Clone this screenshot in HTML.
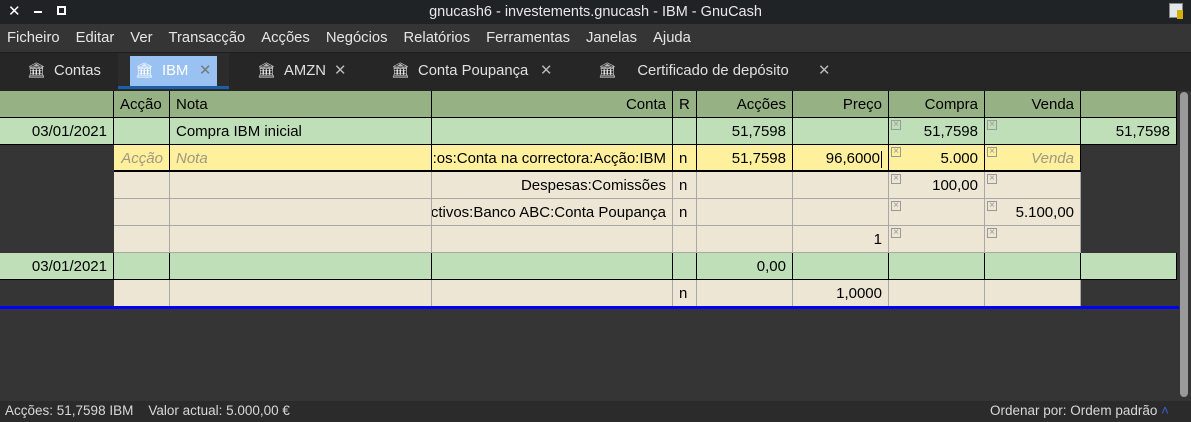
<!DOCTYPE html>
<html><head><meta charset="utf-8"><style>
*{box-sizing:border-box;margin:0;padding:0}
body{width:1191px;height:422px;background:#353535;font-family:"Liberation Sans","DejaVu Sans",sans-serif;font-size:15px;color:#000;position:relative;overflow:hidden}
.abs{position:absolute}
#title{left:0;top:0;width:1191px;height:24px;background:#202326;color:#e8e8e8;text-align:center;line-height:24px;font-size:14.5px}
#menu{left:0;top:24px;width:1191px;height:29px;background:#353535;color:#e6e6e6;line-height:29px;border-bottom:1px solid #1e1e1e;font-size:14.8px}
#menu span{margin-left:7px;margin-right:9px}
#tabs{left:0;top:53px;width:1191px;height:38px;background:#262626;color:#e0e0e0;font-size:14.8px}
.tab{position:absolute;top:0;height:38px;line-height:36px}
.row{position:absolute;left:0;height:27px;display:flex}
.c{height:27px;line-height:28px;padding:0 6px;white-space:nowrap;overflow:hidden;position:relative}
.r{display:flex;justify-content:flex-end}
.hd .c{background:#96b183;border-right:1px solid #000;border-bottom:1px solid #000}
.gr .c{background:#bfdfb9;border-right:1px solid #000;border-bottom:1px solid #000}
.tn .c{background:#ede6d4;border-right:1px solid #a8a8a8;border-bottom:1px solid #a8a8a8}
.ye .c{background:#fef09c;border-right:1px solid #000;border-bottom:2px solid #000}
.tn .c.x,.ye .c.x{background:transparent;border:none}
.ph{color:#a09880;font-style:italic}
.cb{position:absolute;left:2px;top:2px;width:10px;height:10px;border:1px solid #999;font-size:10px;line-height:8px;color:#999;text-align:center;font-style:normal}
.cb:after{content:"×"}
</style></head><body>
<div id="title" class="abs">gnucash6 - investements.gnucash - IBM - GnuCash</div>
<div class="abs" style="left:8px;top:4px;color:#fff;font-size:15px;line-height:15px;font-weight:bold">✕</div>
<div class="abs" style="left:34px;top:11px;width:8px;height:2px;background:#fff"></div>
<div class="abs" style="left:57px;top:6px;width:9px;height:9px;border:2px solid #fff"></div>
<div class="abs" style="left:1169px;top:3px;width:14px;height:15px;background:#dfe6ee;border:1px solid #888"></div>
<div class="abs" style="left:1177px;top:10px;width:6px;height:9px;background:#d6b000"></div>
<div id="menu" class="abs"><span>Ficheiro</span><span>Editar</span><span>Ver</span><span>Transacção</span><span>Acções</span><span>Negócios</span><span>Relatórios</span><span>Ferramentas</span><span>Janelas</span><span>Ajuda</span></div>
<div id="tabs" class="abs">
<div class="tab" style="left:27px">🏛&nbsp;&nbsp;Contas</div>
<div class="abs" style="left:118px;top:0;width:111px;height:37px;background:#2c2c2c"></div>
<div class="abs" style="left:130px;top:3px;width:87px;height:30px;background:#99c1f1"></div>
<div class="abs" style="left:118px;top:33px;width:111px;height:3px;background:#1c5fa8"></div>
<div class="tab" style="left:135px;color:#fff">🏛&nbsp;&nbsp;IBM</div>
<div class="tab" style="left:199px;color:#777">✕</div>
<div class="tab" style="left:257px">🏛&nbsp;&nbsp;AMZN</div><div class="tab" style="left:334px;color:#bbb">✕</div>
<div class="tab" style="left:391px">🏛&nbsp;&nbsp;Conta Poupança</div><div class="tab" style="left:540px;color:#bbb">✕</div>
<div class="tab" style="left:598px">🏛&nbsp;&nbsp;&nbsp;&nbsp;&nbsp;Certificado de depósito</div><div class="tab" style="left:818px;color:#bbb">✕</div>
</div>

<div class="row hd" style="top:91px"><div class="c" style="width:114px"></div><div class="c" style="width:56px">Acção</div><div class="c" style="width:262px">Nota</div><div class="c r" style="width:241px">Conta</div><div class="c" style="width:24px">R</div><div class="c r" style="width:96px">Acções</div><div class="c r" style="width:96px">Preço</div><div class="c r" style="width:96px">Compra</div><div class="c r" style="width:96px">Venda</div><div class="c" style="width:96px"></div></div>

<div class="row gr" style="top:118px"><div class="c r" style="width:114px">03/01/2021</div><div class="c" style="width:56px"></div><div class="c" style="width:262px">Compra IBM inicial</div><div class="c" style="width:241px"></div><div class="c" style="width:24px"></div><div class="c r" style="width:96px">51,7598</div><div class="c" style="width:96px"></div><div class="c r" style="width:96px"><i class="cb"></i>51,7598</div><div class="c" style="width:96px"><i class="cb"></i></div><div class="c r" style="width:96px">51,7598</div></div>

<div class="row ye" style="top:145px"><div class="c x" style="width:114px"></div><div class="c ph r" style="width:56px">Acção</div><div class="c ph" style="width:262px">Nota</div><div class="c r" style="width:241px"><span style="flex-shrink:0">:os:Conta na correctora:Acção:IBM</span></div><div class="c" style="width:24px">n</div><div class="c r" style="width:96px">51,7598</div><div class="c r" style="width:96px">96,6000<span style="display:inline-block;align-self:center;width:1px;height:17px;background:#000;margin:4px 0 0 1px"></span></div><div class="c r" style="width:96px"><i class="cb"></i>5.000</div><div class="c r ph" style="width:96px"><i class="cb"></i>Venda</div><div class="c x" style="width:96px"></div></div>

<div class="row tn" style="top:172px"><div class="c x" style="width:114px"></div><div class="c" style="width:56px"></div><div class="c" style="width:262px"></div><div class="c r" style="width:241px">Despesas:Comissões</div><div class="c" style="width:24px">n</div><div class="c" style="width:96px"></div><div class="c" style="width:96px"></div><div class="c r" style="width:96px"><i class="cb"></i>100,00</div><div class="c" style="width:96px"><i class="cb"></i></div></div>

<div class="row tn" style="top:199px"><div class="c x" style="width:114px"></div><div class="c" style="width:56px"></div><div class="c" style="width:262px"></div><div class="c r" style="width:241px"><span style="flex-shrink:0">ctivos:Banco ABC:Conta Poupança</span></div><div class="c" style="width:24px">n</div><div class="c" style="width:96px"></div><div class="c" style="width:96px"></div><div class="c" style="width:96px"><i class="cb"></i></div><div class="c r" style="width:96px"><i class="cb"></i>5.100,00</div></div>

<div class="row tn" style="top:226px"><div class="c x" style="width:114px"></div><div class="c" style="width:56px"></div><div class="c" style="width:262px"></div><div class="c" style="width:241px"></div><div class="c" style="width:24px"></div><div class="c" style="width:96px"></div><div class="c r" style="width:96px">1</div><div class="c" style="width:96px"><i class="cb"></i></div><div class="c" style="width:96px"><i class="cb"></i></div></div>

<div class="row gr" style="top:253px"><div class="c r" style="width:114px">03/01/2021</div><div class="c" style="width:56px"></div><div class="c" style="width:262px"></div><div class="c" style="width:241px"></div><div class="c" style="width:24px"></div><div class="c r" style="width:96px">0,00</div><div class="c" style="width:96px"></div><div class="c" style="width:96px"></div><div class="c" style="width:96px"></div><div class="c" style="width:96px"></div></div>

<div class="row tn" style="top:280px"><div class="c x" style="width:114px"></div><div class="c" style="width:56px"></div><div class="c" style="width:262px"></div><div class="c" style="width:241px"></div><div class="c" style="width:24px">n</div><div class="c" style="width:96px"></div><div class="c r" style="width:96px">1,0000</div><div class="c" style="width:96px"></div><div class="c" style="width:96px"></div></div>

<div class="abs" style="left:0;top:306px;width:1179px;height:3px;background:#0000ff"></div>
<div class="abs" style="left:1180px;top:92px;width:8px;height:305px;background:#9a9a9a;border-radius:4px"></div>
<div class="abs" style="left:0;top:401px;width:1191px;height:21px;background:#2b2b2b;color:#d8d8d8;font-size:13.5px;line-height:20px;padding-left:5px">Acções: 51,7598 IBM&nbsp;&nbsp;&nbsp;&nbsp;Valor actual: 5.000,00 €</div>
<div class="abs" style="right:22px;top:401px;color:#d8d8d8;font-size:13.5px;line-height:20px">Ordenar por: Ordem padrão <span style="color:#3a5fd8">˄</span></div>
</body></html>
